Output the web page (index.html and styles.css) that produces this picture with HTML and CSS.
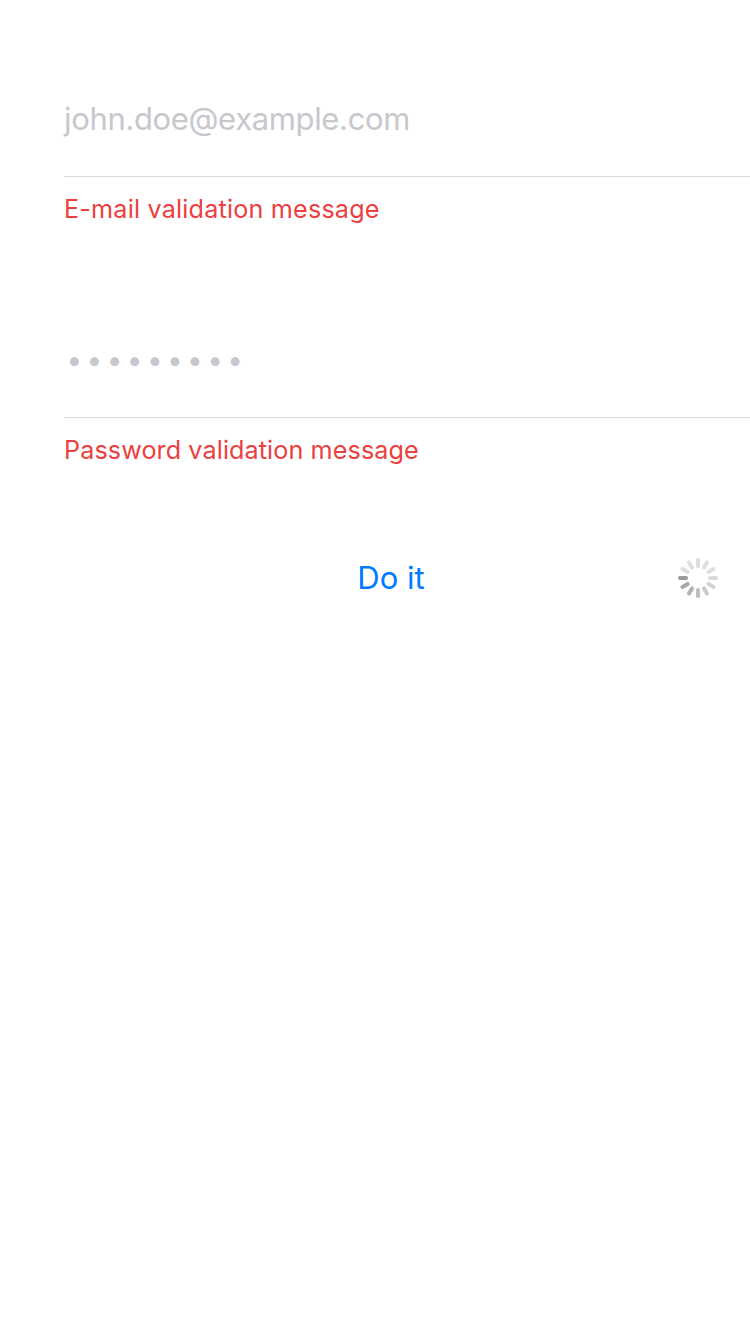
FILE: index.html
```html
<!DOCTYPE html>
<html lang="en">
<head>
<meta charset="utf-8">
<title>Sign in</title>
<link rel="stylesheet" href="styles.css">
</head>
<body>
<main class="form">
  <section class="group email">
    <div class="field"><span class="placeholder">john.doe@example.com</span></div>
    <p class="error"><span class="error-email">E-mail validation message</span></p>
  </section>
  <section class="group password">
    <div class="field"><span class="dots">•••••••••</span></div>
    <p class="error"><span class="error-password">Password validation message</span></p>
  </section>
  <div class="actions">
    <span class="submit">Do it</span>
    <svg class="spinner" viewBox="-20 -20 40 40" fill="none" stroke-width="4" stroke-linecap="round">
      <path stroke="#dedede" d="M0-12V-18"/>
      <path stroke="#dedede" d="M0-12V-18" transform="rotate(30)"/>
      <path stroke="#dedede" d="M0-12V-18" transform="rotate(60)"/>
      <path stroke="#dadada" d="M0-12V-18" transform="rotate(90)"/>
      <path stroke="#d2d2d2" d="M0-12V-18" transform="rotate(120)"/>
      <path stroke="#c9c9c9" d="M0-12V-18" transform="rotate(150)"/>
      <path stroke="#bfbfbf" d="M0-12V-18" transform="rotate(180)"/>
      <path stroke="#b3b3b3" d="M0-12V-18" transform="rotate(210)"/>
      <path stroke="#a8a8a8" d="M0-12V-18" transform="rotate(240)"/>
      <path stroke="#9b9b9b" d="M0-12V-18" transform="rotate(270)"/>
      <path stroke="#dedede" d="M0-12V-18" transform="rotate(300)"/>
      <path stroke="#dedede" d="M0-12V-18" transform="rotate(330)"/>
    </svg>
  </div>
</main>
</body>
</html>
```
FILE: styles.css
```css
body {
  margin: 0;
  background: #fff;
  font-family: Inter, "Liberation Sans", sans-serif;
  font-weight: 400;
}

.form {
  padding: 64px 0 0 64px;
}

.group {
  height: 241px;
}

.field {
  display: flex;
  align-items: center;
  height: 112px;
  border-bottom: 1px solid #d9d9dc;
}

.placeholder {
  padding-bottom: 2px;
  color: #c7c7cd;
  font-size: 31px;
  line-height: 40px;
  letter-spacing: -0.35px;
}

.dots {
  padding: 0 0 2px 2.5px;
  color: #c7c7cd;
  font-size: 28px;
  line-height: 38px;
  letter-spacing: 4.35px;
}

.error {
  margin: 16px 0 0;
  color: #ed4040;
  font-size: 25.2px;
  line-height: 32px;
}

.error-email {
  letter-spacing: 0.18px;
}

.error-password {
  letter-spacing: 0.08px;
}

.actions {
  display: flex;
  align-items: center;
  height: 64px;
  padding-right: 32px;
}

.submit {
  flex: 1;
  padding-left: 40px;
  color: #007aff;
  font-size: 31px;
  line-height: 40px;
  text-align: center;
}

.spinner {
  width: 40px;
  height: 40px;
}
```
